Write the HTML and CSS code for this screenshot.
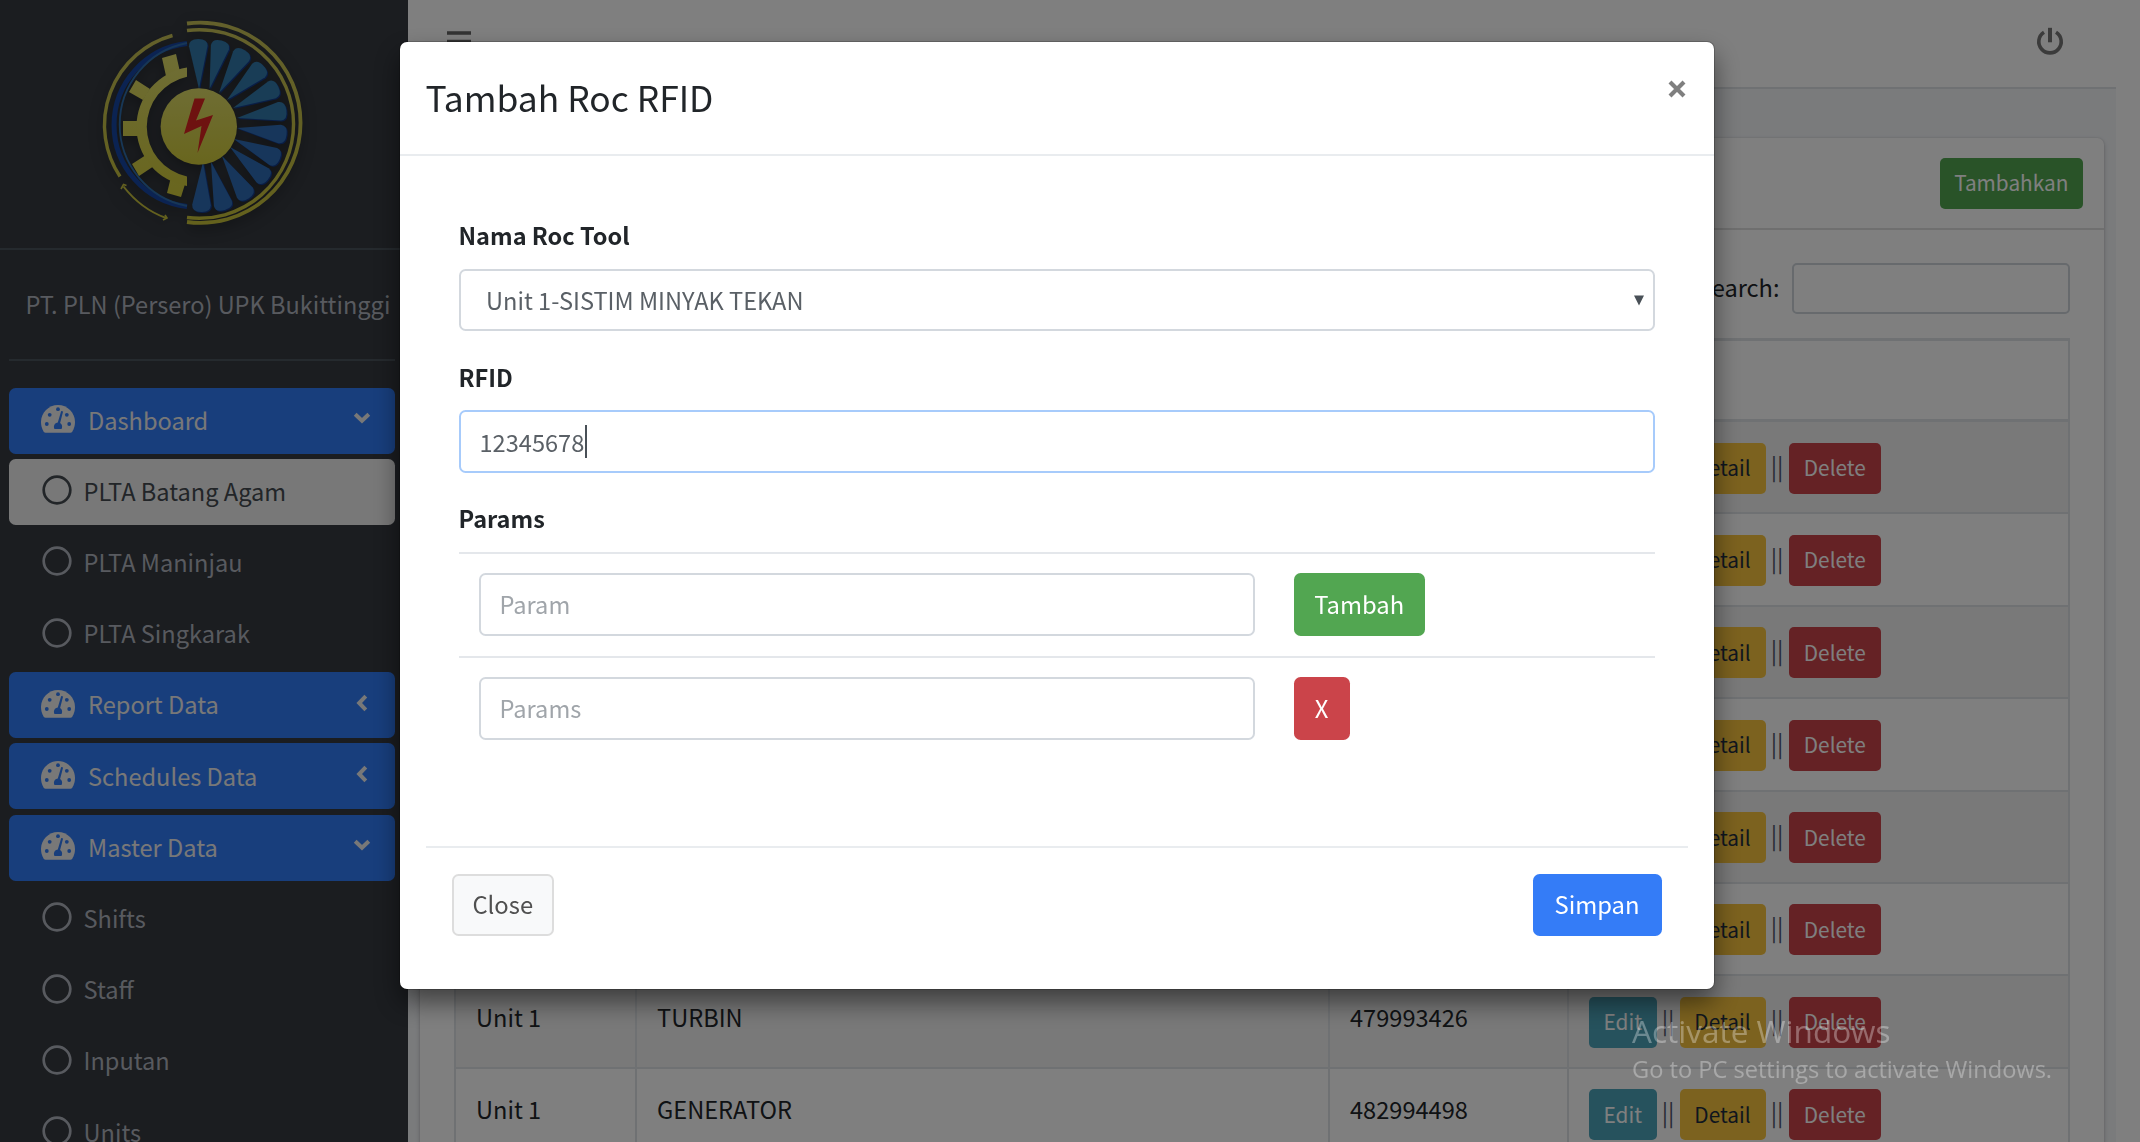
FILE: index.html
```html
<!DOCTYPE html>
<html lang="id">
<head>
<meta charset="utf-8">
<title>Tambah Roc RFID</title>
<link rel="stylesheet" href="styles.css">
</head>
<body>
<svg class="defs" width="0" height="0" aria-hidden="true">
  <defs>
    <linearGradient id="gold" x1="0" y1="0" x2="0" y2="1"><stop offset="0" stop-color="#dedb68"/><stop offset="1" stop-color="#d2cc3c"/></linearGradient>
    <linearGradient id="gold-ring" gradientUnits="userSpaceOnUse" x1="0" y1="20" x2="0" y2="225"><stop offset="0" stop-color="#c6c158"/><stop offset="1" stop-color="#c8c23a"/></linearGradient>
    <path id="blade" d="M0 0L-9.300-43Q-9.500-50 0-50Q9.500-50 9.300-43Z"/>
    <symbol id="gauge" viewBox="0 0 34 28">
      <path fill="currentColor" d="M17 0C7.600 0 0 7.600 0 17c0 3.400.9 6.700 2.600 9.500.5.800 1.200 1.200 2 1.200h24.800c.8 0 1.500-.4 2-1.200C33.100 23.700 34 20.400 34 17 34 7.600 26.400 0 17 0z"/>
      <g class="gauge-hole"><circle cx="17" cy="4.200" r="1.900"/><circle cx="8.700" cy="9.800" r="1.900"/><circle cx="25.800" cy="9.800" r="1.900"/><circle cx="5.800" cy="19" r="1.900"/><circle cx="28.200" cy="19" r="1.900"/><path d="M20.200 6l1.900.600-3 11.500c1.300.8 2 2.100 2 3.600 0 .900-.2 1.600-.6 2.300h-7c-.4-.7-.6-1.400-.6-2.300 0-2.200 1.700-4 3.900-4.200z"/></g>
    </symbol>
    <symbol id="ring" viewBox="0 0 30 30"><circle cx="15" cy="15" r="13.300" fill="none" stroke="currentColor" stroke-width="2.700"/></symbol>
    <symbol id="down" viewBox="0 0 18 12"><path d="M2.200 2.200L9 8.800l6.800-6.600" fill="none" stroke="currentColor" stroke-width="4"/></symbol>
    <symbol id="left" viewBox="0 0 12 18"><path d="M9.800 2.200L3.200 9l6.600 6.800" fill="none" stroke="currentColor" stroke-width="4"/></symbol>
  </defs>
</svg>
<div class="app">
  <aside class="sidebar">
    <div class="brand">
      <svg class="logo" viewBox="96 14 214 224" width="214" height="224">
        <g fill="none" stroke="url(#gold-ring)">
          <path d="M187 23.500A100.150 100.150 0 1 1 187 222" stroke-width="3.800"/>
          <path d="M187 30.500A94.300 94.300 0 1 1 187 217.500" stroke-width="3.400"/>
          <path d="M172.500 35.500A93 93 0 0 0 120 176.500" stroke-width="3.400"/>
          <path d="M123.500 186.500Q141 209 166 218" stroke-width="2"/>
          <path d="M121 189l2.500-4.500 3 1M163 220l4-2-2-3" stroke-width="1.600"/>
        </g>
        <path d="M187 43.500A82 82 0 0 0 187 206.500" fill="none" stroke="#1746a4" stroke-width="5"/>
        <path d="M187 43A83 83 0 0 0 187 206" fill="none" stroke="#2f6fae" stroke-width="1.800"/>
        <g fill="url(#gold)">
          <path d="M162 58l14-4 4 18-14 4zM136 80l14 9-7 11-14-8zM123 121h16v15h-16zM132 164l14-9 8 11-15 10zM171 177l15 4-5 16-14-4z"/>
          <path d="M187 67.500v9.300A51 51 0 0 0 187 176.500v9.500A60 60 0 0 1 187 67.500z"/>
        </g>
        <g class="turbine" fill="#327aad">
          <use href="#blade" transform="translate(199 89) rotate(-1)"/>
          <use href="#blade" transform="translate(209.500 89) rotate(14)"/>
          <use href="#blade" transform="translate(219 93) rotate(31)"/>
          <use href="#blade" transform="translate(227 100) rotate(47)"/>
          <use href="#blade" transform="translate(233 108) rotate(65)"/>
          <use href="#blade" transform="translate(237 118) rotate(81)"/>
          <g fill="#2f6db6">
            <use href="#blade" transform="translate(237 128) rotate(98)"/>
            <use href="#blade" transform="translate(234 139) rotate(114)"/>
            <use href="#blade" transform="translate(230 147) rotate(131)"/>
            <use href="#blade" transform="translate(222 156) rotate(148)"/>
            <use href="#blade" transform="translate(211 162) rotate(164)"/>
            <use href="#blade" transform="translate(203 162) rotate(182)"/>
          </g>
        </g>
        <circle cx="198.800" cy="126.500" r="38.200" fill="url(#gold)"/>
        <path d="M194.500 98.500h10.500l-9 22 17-5.500-15.500 38 4-27-17.500 8z" fill="#dc2420"/>
      </svg>
    </div>
    <div class="company">PT. PLN (Persero) UPK Bukittinggi</div>
    <nav class="menu">
      <a class="item group"><svg class="i-gauge"><use href="#gauge"/></svg><span>Dashboard</span><svg class="i-down"><use href="#down"/></svg></a>
      <a class="item sub active"><svg class="i-ring"><use href="#ring"/></svg><span>PLTA Batang Agam</span></a>
      <a class="item sub"><svg class="i-ring"><use href="#ring"/></svg><span>PLTA Maninjau</span></a>
      <a class="item sub"><svg class="i-ring"><use href="#ring"/></svg><span>PLTA Singkarak</span></a>
      <a class="item group"><svg class="i-gauge"><use href="#gauge"/></svg><span>Report Data</span><svg class="i-left"><use href="#left"/></svg></a>
      <a class="item group"><svg class="i-gauge"><use href="#gauge"/></svg><span>Schedules Data</span><svg class="i-left"><use href="#left"/></svg></a>
      <a class="item group"><svg class="i-gauge"><use href="#gauge"/></svg><span>Master Data</span><svg class="i-down"><use href="#down"/></svg></a>
      <a class="item sub"><svg class="i-ring"><use href="#ring"/></svg><span>Shifts</span></a>
      <a class="item sub"><svg class="i-ring"><use href="#ring"/></svg><span>Staff</span></a>
      <a class="item sub"><svg class="i-ring"><use href="#ring"/></svg><span>Inputan</span></a>
      <a class="item sub"><svg class="i-ring"><use href="#ring"/></svg><span>Units</span></a>
    </nav>
  </aside>
  <div class="main">
    <header class="topbar">
      <svg width="24" height="24" viewBox="0 0 24 24"><path d="M0 2h24M0 10.500h24M0 19h24" stroke="#666" stroke-width="3.600"/></svg>
      <svg width="28" height="28" viewBox="0 0 28 28" fill="none" stroke="#777" stroke-width="3.600"><path d="M8 5.200A11.200 11.200 0 1 0 20 5.200"/><path d="M14 .8v14.500" stroke-width="4"/></svg>
    </header>
    <section class="content">
      <div class="card">
        <div class="card-head"><button class="btn btn-sm green">Tambahkan</button></div>
        <div class="card-body">
          <label class="search"><span>Search:</span><input type="text"></label>
          <table>
            <thead><tr><th></th><th></th><th></th><th></th></tr></thead>
            <tbody>
              <tr><td></td><td></td><td></td><td><button class="btn btn-sm teal">Edit</button><i>||</i><button class="btn btn-sm yellow">Detail</button><i>||</i><button class="btn btn-sm red">Delete</button></td></tr>
              <tr><td></td><td></td><td></td><td><button class="btn btn-sm teal">Edit</button><i>||</i><button class="btn btn-sm yellow">Detail</button><i>||</i><button class="btn btn-sm red">Delete</button></td></tr>
              <tr><td></td><td></td><td></td><td><button class="btn btn-sm teal">Edit</button><i>||</i><button class="btn btn-sm yellow">Detail</button><i>||</i><button class="btn btn-sm red">Delete</button></td></tr>
              <tr><td></td><td></td><td></td><td><button class="btn btn-sm teal">Edit</button><i>||</i><button class="btn btn-sm yellow">Detail</button><i>||</i><button class="btn btn-sm red">Delete</button></td></tr>
              <tr><td></td><td></td><td></td><td><button class="btn btn-sm teal">Edit</button><i>||</i><button class="btn btn-sm yellow">Detail</button><i>||</i><button class="btn btn-sm red">Delete</button></td></tr>
              <tr><td></td><td></td><td></td><td><button class="btn btn-sm teal">Edit</button><i>||</i><button class="btn btn-sm yellow">Detail</button><i>||</i><button class="btn btn-sm red">Delete</button></td></tr>
              <tr><td>Unit 1</td><td>TURBIN</td><td>479993426</td><td><button class="btn btn-sm teal">Edit</button><i>||</i><button class="btn btn-sm yellow">Detail</button><i>||</i><button class="btn btn-sm red">Delete</button></td></tr>
              <tr><td>Unit 1</td><td>GENERATOR</td><td>482994498</td><td><button class="btn btn-sm teal">Edit</button><i>||</i><button class="btn btn-sm yellow">Detail</button><i>||</i><button class="btn btn-sm red">Delete</button></td></tr>
            </tbody>
          </table>
        </div>
      </div>
    </section>
  </div>
</div>

<div class="backdrop">
  <div class="modal" role="dialog">
    <div class="modal-head">
      <h4>Tambah Roc RFID</h4>
      <svg width="18" height="18" viewBox="0 0 18 18"><path d="M2 2l14 14M16 2L2 16" stroke="#7f7f7f" stroke-width="4.200"/></svg>
    </div>
    <div class="modal-body">
      <label class="field-label">Nama Roc Tool</label>
      <div class="control select"><span>Unit 1-SISTIM MINYAK TEKAN</span><svg width="10" height="11" viewBox="0 0 10 11"><path d="M0 .5h10L5 10.500z" fill="#495057"/></svg></div>
      <label class="field-label">RFID</label>
      <div class="control focus"><span>12345678</span><b class="caret"></b></div>
      <label class="field-label">Params</label>
      <div class="param-row"><div class="control hint">Param</div><button class="btn green">Tambah</button></div>
      <div class="param-row"><div class="control hint">Params</div><button class="btn red">X</button></div>
    </div>
    <div class="modal-foot"><button class="btn light">Close</button><button class="btn blue">Simpan</button></div>
  </div>
</div>
<div class="watermark"><p class="wm-title">Activate Windows</p><p class="wm-text">Go to PC settings to activate Windows.</p></div>
</body>
</html>
```
FILE: styles.css
```css
* { box-sizing: border-box; }
body {
  margin: 0;
  height: 1142px;
  overflow: hidden;
  background: #fff;
  color: #212529;
  font: 23.600px/39.6px "Noto Sans CJK SC", "Noto Sans CJK JP", sans-serif;
  white-space: nowrap;
}
.defs { display: block; position: absolute; }
.app { display: flex; height: 1142px; overflow: hidden; }

/* Sidebar */
.sidebar {
  width: 407.500px;
  flex: none;
  background: #363a40;
  color: #b0b5be;
  overflow: hidden;
}
.brand { height: 250px; padding: 14px 0 0 96px; border-bottom: 2px solid #4b545c; }
.logo { display: block; filter: drop-shadow(0 5px 7px rgba(0, 0, 0, .35)); }
.turbine { filter: drop-shadow(1.500px 1px 0 #123a8c); }
.company {
  height: 111px;
  margin: 0 13px 0 9px;
  padding: 35px 0 0 16.500px;
  border-bottom: 2px solid #4b545c;
  font-size: 23.550px;
}
.menu { padding: 26.500px 13px 0 9px; display: flex; flex-direction: column; gap: 5.200px; }
.item { height: 66px; flex: none; display: flex; align-items: center; border-radius: 6.600px; }
.group { background: #307cf8; color: #f0f0f0; padding-left: 31.500px; padding-right: 24px; }
.group span { flex: 1; margin-left: 13.500px; }
.sub { padding-left: 33px; }
.sub span { margin-left: 11.500px; }
.active { background: #f0f0f0; color: #454b51; }
.i-gauge { width: 34px; height: 28px; margin-bottom: 3px; }
.gauge-hole { fill: #307cf8; }
.i-ring { width: 30px; height: 30px; margin-bottom: 3px; }
.i-down { width: 18px; height: 12px; margin-bottom: 6px; }
.i-left { width: 12px; height: 18px; margin: 0 3px 4px 0; }

/* Main area */
.main { width: 1708.500px; flex: none; background: #f4f6f9; }
.topbar {
  height: 88.500px;
  background: #fff;
  border-bottom: 2px solid #dee2e6;
  display: flex;
  justify-content: space-between;
  padding: 26.500px 52px 0 39.500px;
}
.topbar svg:first-child { margin-top: 4px; }
.content { padding: 49px 12.500px 0 12.500px; }
.card {
  height: 1100px;
  background: #fff;
  border-radius: 6.600px;
  box-shadow: 0 0 2px rgba(0, 0, 0, .125), 0 2px 5px rgba(0, 0, 0, .2);
}
.card-head { height: 92.500px; border-bottom: 2px solid #dfdfdf; display: flex; justify-content: flex-end; padding: 20px 20.500px 0 0; }
.card-body { padding: 33px 34px 0 34px; }
.search { display: flex; justify-content: flex-end; gap: 12px; height: 75px; line-height: 49px; }
.search input { width: 278px; height: 51px; border: 2px solid #ced4da; border-radius: 5px; background: #fff; padding: 0; }

table { display: block; border-left: 2px solid #dee2e6; }
thead, tbody { display: block; }
tr { display: grid; grid-template-columns: 181px 693px 238.500px 1fr; height: 92.400px; }
th { border-top: 3px solid #dee2e6; border-bottom: 3px solid #dee2e6; border-right: 2px solid #dee2e6; height: 84px; }
thead tr { height: 84px; }
td { border-right: 2px solid #dee2e6; border-bottom: 2px solid #dee2e6; padding: 21.500px 0 0 20px; }
tbody tr:nth-child(odd) { background: #f2f2f2; }
td:last-child { display: flex; align-items: flex-start; padding: 20.500px 0 0 20.500px; }
td i { font-style: normal; width: 23px; text-align: center; line-height: 46px; font-size: 23.500px; color: #50566c; }
td:last-child .teal { width: 67.500px; }
td:last-child .yellow { width: 86px; }
td:last-child .red { width: 92.700px; }

/* Buttons */
.btn {
  font: inherit;
  font-size: 23.800px;
  height: 62.700px;
  line-height: 58px;
  padding: 0 0 2px;
  border: 0;
  border-radius: 6.600px;
  color: #fff;
  flex: none;
  text-align: center;
}
.btn-sm { height: 51px; line-height: 46px; font-size: 20.800px; border-radius: 5px; }
.card-head .btn { width: 143.500px; }
.green { background: #52a651; }
.red { background: #cb444a; }
.blue { background: #347cf7; }
.teal { background: #4ca4ba; }
.yellow { background: #f8c43e; color: #1f2d3d; }
.light { background: #f8f9fa; color: #505050; border: 2px solid #ddd; }

/* Modal */
.backdrop { position: fixed; inset: 0; background: rgba(0, 0, 0, .5); padding: 42px 0 0 399.500px; }
.modal {
  width: 1314.500px;
  height: 947px;
  background: #fff;
  border-radius: 7px;
  box-shadow: 0 0 0 1px rgba(0, 0, 0, .2), 0 13px 26px rgba(0, 0, 0, .5);
}
.modal-head { height: 114px; border-bottom: 2px solid #e9ecef; display: flex; justify-content: space-between; padding: 25px 28px 0 26px; }
.modal-head h4 { margin: 0; font-size: 35.400px; line-height: 59px; font-weight: 400; }
.modal-head svg { margin-top: 13px; }
.modal-body { height: 689.500px; padding: 60px 59px 0; }
.field-label { display: block; font-weight: 700; height: 52.500px; line-height: 39px; font-size: 23.500px; }
.control {
  height: 62.700px;
  border: 2px solid #d3d8de;
  border-radius: 6.600px;
  padding: 0 19px;
  margin-bottom: 26.500px;
  color: #5a6066;
  line-height: 58px;
  display: flex;
  background: #fff;
}
.select { padding: 0 9.500px 0 25.500px; justify-content: space-between; }
.select svg { margin-top: 24px; }
.focus { border-color: #a7cbfb; }
.focus span { padding-top: 1px; }
.caret { width: 2px; height: 33px; background: #495057; margin: 13px 0 0 1px; }
.hint { color: #a0a5aa; width: 776px; margin: 0; }
.param-row { border-top: 2px solid #e4e7eb; display: flex; gap: 39px; padding: 19.500px 0 0 20px; height: 104px; }
.param-row .green { width: 131.500px; }
.param-row .red { width: 56px; }
.modal-foot { margin: 0 26px; border-top: 2px solid #e9ecef; display: flex; justify-content: space-between; padding: 26px 26.500px 0; }
.light { width: 101.500px; line-height: 56px; }
.blue { width: 129px; }

/* Activation notice floating over the desktop */
.watermark { position: fixed; left: 1632px; top: 1009px; color: rgba(255, 255, 255, .32); font-family: "Open Sans", sans-serif; }
.watermark p { margin: 0; }
.wm-title { font-size: 31.500px; line-height: 44px; }
.wm-text { font-size: 23.600px; line-height: 32px; }
```
